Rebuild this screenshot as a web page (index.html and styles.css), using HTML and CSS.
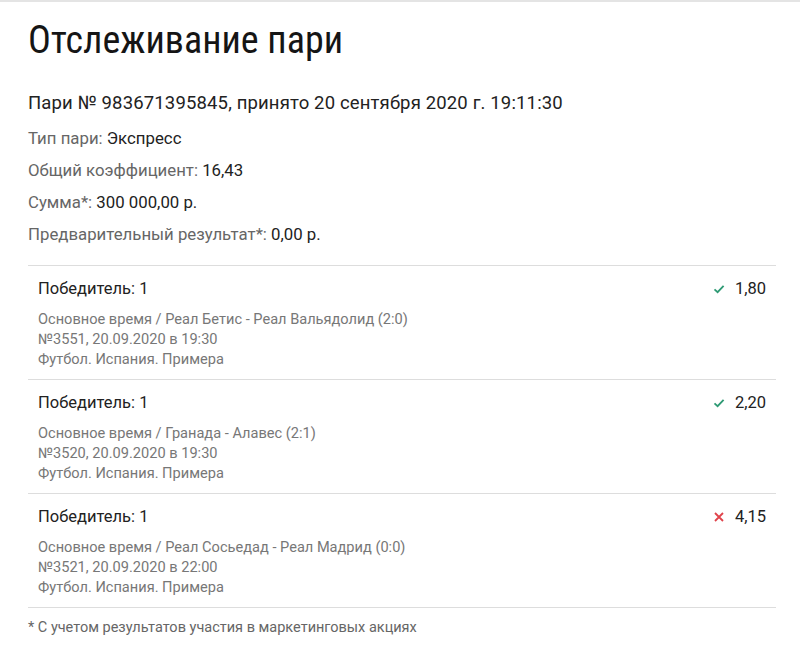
FILE: index.html
```html
<!DOCTYPE html>
<html lang="ru">
<head>
    <meta charset="UTF-8">
    <meta name="viewport" content="width=device-width, initial-scale=1.0">
    <title>Отслеживание пари</title>
    <link rel="stylesheet" href="styles.css">
</head>
<body>

    <div class="tracker">
        <h1>Отслеживание пари</h1>

        <p class="bet-title">Пари № 983671395845, принято 20 сентября 2020 г. 19:11:30</p>

        <ul class="bet-info">
            <li><span class="label">Тип пари:</span> Экспресс</li>
            <li><span class="label">Общий коэффициент:</span> 16,43</li>
            <li><span class="label">Сумма*:</span> 300 000,00 р.</li>
            <li><span class="label">Предварительный результат*:</span> 0,00 р.</li>
        </ul>

        <div class="events">
            <div class="event">
                <div class="event-head">
                    <span class="outcome">Победитель: 1</span>
                    <span class="odds">
                        <svg class="icon win" viewBox="0 0 12 12"><path d="M1.5 6.3 L4.6 9.2 L10.6 2.8" /></svg>
                        1,80
                    </span>
                </div>
                <div class="event-details">
                    <div>Основное время / Реал Бетис - Реал Вальядолид (2:0)</div>
                    <div>№3551, 20.09.2020 в 19:30</div>
                    <div>Футбол. Испания. Примера</div>
                </div>
            </div>

            <div class="event">
                <div class="event-head">
                    <span class="outcome">Победитель: 1</span>
                    <span class="odds">
                        <svg class="icon win" viewBox="0 0 12 12"><path d="M1.5 6.3 L4.6 9.2 L10.6 2.8" /></svg>
                        2,20
                    </span>
                </div>
                <div class="event-details">
                    <div>Основное время / Гранада - Алавес (2:1)</div>
                    <div>№3520, 20.09.2020 в 19:30</div>
                    <div>Футбол. Испания. Примера</div>
                </div>
            </div>

            <div class="event">
                <div class="event-head">
                    <span class="outcome">Победитель: 1</span>
                    <span class="odds">
                        <svg class="icon lose" viewBox="0 0 12 12"><path d="M2 2 L10 10 M10 2 L2 10" /></svg>
                        4,15
                    </span>
                </div>
                <div class="event-details">
                    <div>Основное время / Реал Сосьедад - Реал Мадрид (0:0)</div>
                    <div>№3521, 20.09.2020 в 22:00</div>
                    <div>Футбол. Испания. Примера</div>
                </div>
            </div>
        </div>

        <p class="note">* С учетом результатов участия в маркетинговых акциях</p>
    </div>

</body>
</html>
```

FILE: styles.css
```css
body {
    font-family: Roboto, 'Liberation Sans', sans-serif;
    background-color: #fff;
    color: #222;
    margin: 0;
}

.tracker {
    border-top: 2px solid #e4e4e4;
    padding: 0 24px 0 28px;
}

h1 {
    font-size: 38px;
    font-weight: 400;
    font-stretch: condensed;
    color: #151515;
    margin: 0;
    padding-top: 15px;
    line-height: 46px;
}

.bet-title {
    font-size: 18.5px;
    letter-spacing: 0.15px;
    margin: 28px 0 0;
    line-height: 24px;
}

.bet-info {
    list-style: none;
    margin: 7px 0 0;
    padding: 0;
    font-size: 16.8px;
}

.bet-info li {
    line-height: 32px;
}

.bet-info .label {
    color: #666;
}

.events {
    margin-top: 15px;
    border-top: 1px solid #ddd;
}

.event {
    padding: 12px 10px 10px;
    border-bottom: 1px solid #ddd;
}

.event-head {
    display: flex;
    justify-content: space-between;
    align-items: center;
    font-size: 16.5px;
    line-height: 22px;
}

.odds {
    display: flex;
    align-items: center;
    gap: 10px;
}

.icon {
    width: 12px;
    height: 12px;
    fill: none;
    stroke-width: 1.8;
}

.icon.win {
    stroke: #2e9a74;
}

.icon.lose {
    stroke: #e0434b;
}

.event-details {
    margin-top: 9px;
    font-size: 14.6px;
    line-height: 20px;
    color: #777;
}

.note {
    font-size: 14.5px;
    color: #666;
    margin: 11px 0 0;
}
```
